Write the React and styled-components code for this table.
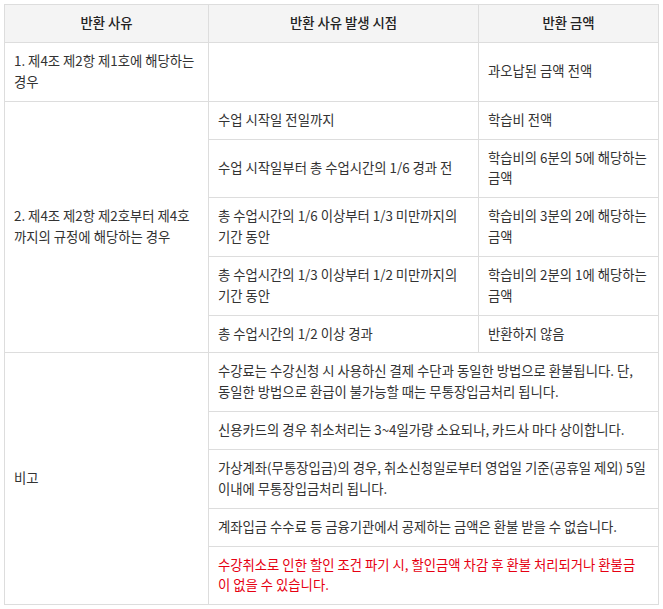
import React from 'react'
import styled, { createGlobalStyle } from 'styled-components'

const GlobalStyle = createGlobalStyle`
  html, body {
    margin: 0;
    padding: 0;
    background: #fff;
  }
  body {
    font-family: "Noto Sans CJK KR", "Noto Sans", sans-serif;
  }
`

const Wrap = styled.div`
  padding: 4px 5px 4px 4px;
`

const Table = styled.table`
  width: 654px;
  border-collapse: collapse;
  table-layout: fixed;
  font-size: 13.35px;
  line-height: 20.85px;
  color: #333;
  border: 1px solid #ddd;
`

const Th = styled.th`
  height: 37px;
  padding: 0 9px;
  background: #f4f4f4;
  border: 1px solid #ddd;
  font-weight: 500;
  color: #222;
  text-align: center;
  vertical-align: middle;
`

const Td = styled.td`
  padding: 8px 9px;
  border: 1px solid #ddd;
  text-align: left;
  vertical-align: middle;
  color: ${p => (p.$alert ? '#e60012' : '#333')};
`

// keeps the reference's line breaks
const Lines = ({ lines }) =>
  lines.map((l, i) => (
    <React.Fragment key={i}>
      {i > 0 && <br />}
      {l}
    </React.Fragment>
  ))

const periods = [
  [['수업 시작일 전일까지'], ['학습비 전액']],
  [['수업 시작일부터 총 수업시간의 1/6 경과 전'], ['학습비의 6분의 5에 해당하는', '금액']],
  [['총 수업시간의 1/6 이상부터 1/3 미만까지의', '기간 동안'], ['학습비의 3분의 2에 해당하는', '금액']],
  [['총 수업시간의 1/3 이상부터 1/2 미만까지의', '기간 동안'], ['학습비의 2분의 1에 해당하는', '금액']],
  [['총 수업시간의 1/2 이상 경과'], ['반환하지 않음']],
]

const notes = [
  { lines: ['수강료는 수강신청 시 사용하신 결제 수단과 동일한 방법으로 환불됩니다. 단,', '동일한 방법으로 환급이 불가능할 때는 무통장입금처리 됩니다.'] },
  { lines: ['신용카드의 경우 취소처리는 3~4일가량 소요되나, 카드사 마다 상이합니다.'] },
  { lines: ['가상계좌(무통장입금)의 경우, 취소신청일로부터 영업일 기준(공휴일 제외) 5일', '이내에 무통장입금처리 됩니다.'] },
  { lines: ['계좌입금 수수료 등 금융기관에서 공제하는 금액은 환불 받을 수 없습니다.'] },
  { lines: ['수강취소로 인한 할인 조건 파기 시, 할인금액 차감 후 환불 처리되거나 환불금', '이 없을 수 있습니다.'], alert: true },
]

export default function App() {
  return (
    <Wrap>
      <GlobalStyle />
      <Table>
        <colgroup>
          <col style={{ width: 204 }} />
          <col style={{ width: 270 }} />
          <col style={{ width: 180 }} />
        </colgroup>
        <thead>
          <tr>
            <Th>반환 사유</Th>
            <Th>반환 사유 발생 시점</Th>
            <Th>반환 금액</Th>
          </tr>
        </thead>
        <tbody>
          <tr>
            <Td><Lines lines={['1. 제4조 제2항 제1호에 해당하는', '경우']} /></Td>
            <Td></Td>
            <Td>과오납된 금액 전액</Td>
          </tr>
          {periods.map(([when, amount], i) => (
            <tr key={i}>
              {i === 0 && (
                <Td rowSpan={periods.length}>
                  <Lines lines={['2. 제4조 제2항 제2호부터 제4호', '까지의 규정에 해당하는 경우']} />
                </Td>
              )}
              <Td><Lines lines={when} /></Td>
              <Td><Lines lines={amount} /></Td>
            </tr>
          ))}
          {notes.map((n, i) => (
            <tr key={i}>
              {i === 0 && <Td rowSpan={notes.length}>비고</Td>}
              <Td colSpan={2} $alert={n.alert}><Lines lines={n.lines} /></Td>
            </tr>
          ))}
        </tbody>
      </Table>
    </Wrap>
  )
}
